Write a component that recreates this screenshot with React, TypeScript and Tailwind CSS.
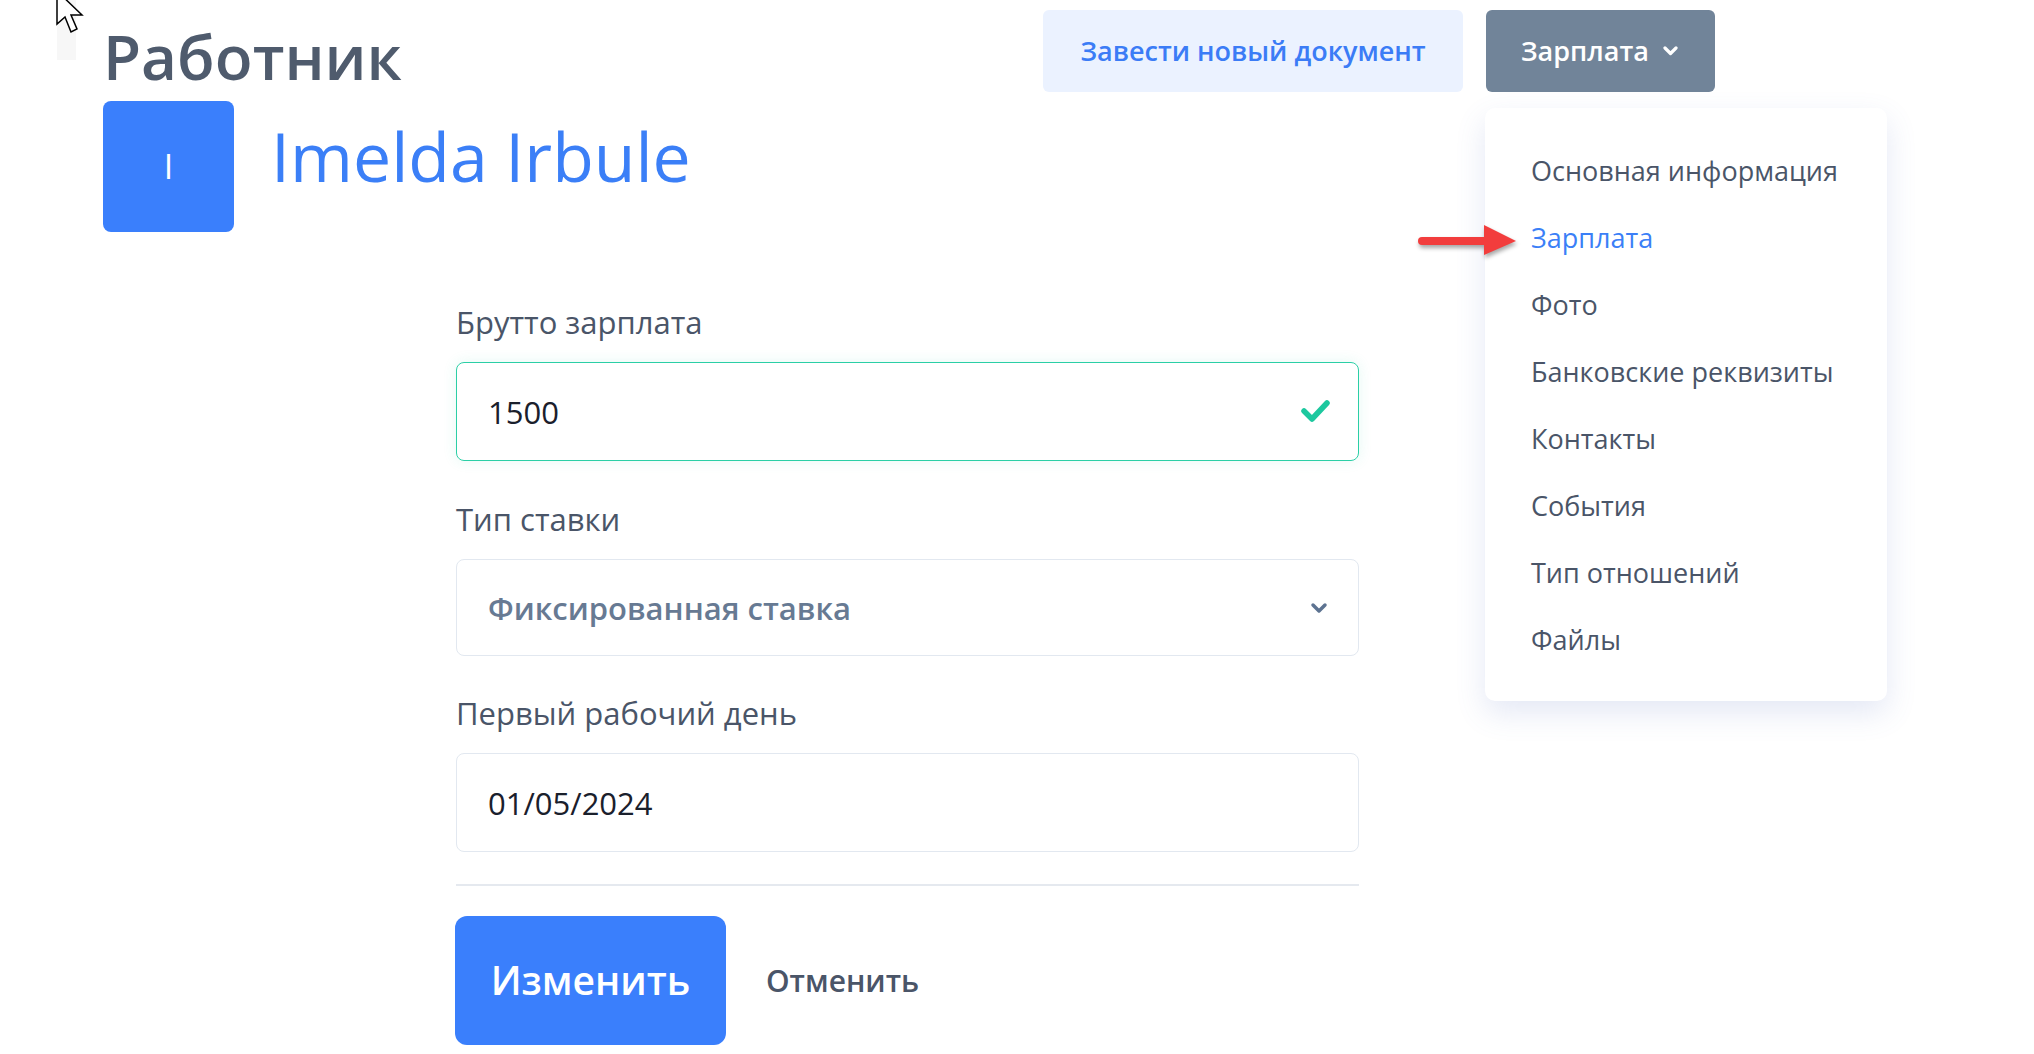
import React from "react";

const menuItems = [
  "Основная информация",
  "Зарплата",
  "Фото",
  "Банковские реквизиты",
  "Контакты",
  "События",
  "Тип отношений",
  "Файлы",
];

function Label({ children }: { children: React.ReactNode }) {
  return <div className="mb-[20px] h-[40px] text-[31px] leading-[40px] text-[#4a5568]">{children}</div>;
}

export default function App() {
  return (
    <div className="relative min-h-[1054px] w-full overflow-hidden bg-white font-['Open_Sans','Noto_Sans',sans-serif]">
      {/* faint block + cursor */}
      <div className="absolute left-[57px] top-0 h-[60px] w-[19px] bg-[#f7f7f7]" />
      <svg className="absolute left-[56px] top-[-10px]" width="30" height="46" viewBox="0 0 30 46">
        <path d="M1 1 L1 34 L9 27 L15 42 L21 39 L15 25 L26 25 Z" fill="#fff" stroke="#000" strokeWidth="1.5" strokeLinejoin="miter" />
      </svg>

      <div className="pl-[103px] pr-[319px] pt-[10px]">
        {/* header row */}
        <div className="flex items-start justify-between">
          <h1 className="pt-[15px] text-[62px] font-semibold leading-[62px] text-[#4f5b6d]">Работник</h1>
          <div className="flex items-start gap-[23px]">
            <button className="flex h-[82px] w-[420px] items-center justify-center rounded-[6px] bg-[#ebf2ff] text-[27px] font-semibold text-[#3b7cf6]">
              Завести новый документ
            </button>
            <div className="relative">
              <button className="flex h-[82px] w-[229px] items-center gap-[14px] rounded-[6px] bg-[#718499] pl-[35px] text-[27px] font-semibold text-white">
                Зарплата
                <svg width="15" height="10" viewBox="0 0 15 10">
                  <polyline points="2,2 7.5,7.5 13,2" fill="none" stroke="#fff" strokeWidth="3.2" strokeLinecap="round" strokeLinejoin="round" />
                </svg>
              </button>
              <div className="absolute left-[-1px] top-[98px] w-[402px] rounded-[10px] bg-white pb-[27px] pt-[30px] shadow-[0_12px_30px_rgba(90,110,190,0.16)]">
                {menuItems.map((m) => (
                  <div
                    key={m}
                    className={`flex h-[67px] items-center pl-[46px] text-[27px] ${m === "Зарплата" ? "text-[#3b7ff7]" : "text-[#4a5568]"}`}
                  >
                    {m}
                  </div>
                ))}
              </div>
            </div>
          </div>
        </div>

        {/* avatar row */}
        <div className="mt-[9px] flex items-start gap-[37px]">
          <div className="flex h-[131px] w-[131px] items-center justify-center rounded-[8px] bg-[#3a7ffc] text-[34px] text-white">
            I
          </div>
          <div className="mt-[22px] text-[68px] font-medium leading-[66px] text-[#3b7ff7]">Imelda Irbule</div>
        </div>

        {/* form */}
        <div className="ml-[353px] mt-[70px] w-[903px]">
          <Label>Брутто зарплата</Label>
          <div className="flex h-[99px] items-center justify-between rounded-[8px] border border-[#2bcfa6] px-[31px] shadow-[0_0_14px_rgba(43,207,166,0.12)]">
            <span className="text-[31px] leading-[40px] text-[#1a202c]">1500</span>
            <svg width="30" height="26" viewBox="0 0 30 26" className="mr-[-3px]">
              <polyline points="4,12 12,20 27,4" fill="none" stroke="#1dc89f" strokeWidth="5.5" strokeLinecap="round" strokeLinejoin="round" />
            </svg>
          </div>

          <div className="mt-[38px]">
            <Label>Тип ставки</Label>
            <div className="flex h-[97px] items-center justify-between rounded-[8px] border border-[#e2e8f0] pl-[31px] pr-[30px]">
              <span className="text-[31px] font-semibold leading-[40px] text-[#677a93]">Фиксированная ставка</span>
              <svg width="18" height="12" viewBox="0 0 18 12">
                <polyline points="3,3 9,9 15,3" fill="none" stroke="#5d7391" strokeWidth="3.5" strokeLinecap="round" strokeLinejoin="round" />
              </svg>
            </div>
          </div>

          <div className="mt-[37px]">
            <Label>Первый рабочий день</Label>
            <div className="flex h-[99px] items-center rounded-[8px] border border-[#e2e8f0] px-[31px]">
              <span className="text-[31px] leading-[40px] text-[#1a202c]">01/05/2024</span>
            </div>
          </div>

          <div className="mt-[32px] h-[2px] bg-[#e5e9ef]" />

          <div className="mt-[30px] flex items-center gap-[40px]">
            <button className="-ml-[1px] flex h-[129px] w-[271px] items-center justify-center rounded-[12px] bg-[#3a7ffc] text-[39px] font-semibold text-white">
              Изменить
            </button>
            <button className="text-[30px] font-semibold text-[#4a5568]">Отменить</button>
          </div>
        </div>
      </div>

      {/* red arrow (over the menu) */}
      <svg
        className="absolute left-[1416px] top-[222px] z-10 drop-shadow-[1px_3px_2px_rgba(0,0,0,0.35)]"
        width="104"
        height="36"
        viewBox="0 0 104 36"
      >
        <line x1="6" y1="19" x2="72" y2="19" stroke="#f23d3d" strokeWidth="8" strokeLinecap="round" />
        <polygon points="68,3 100,19 68,33" fill="#f23d3d" />
      </svg>
    </div>
  );
}
